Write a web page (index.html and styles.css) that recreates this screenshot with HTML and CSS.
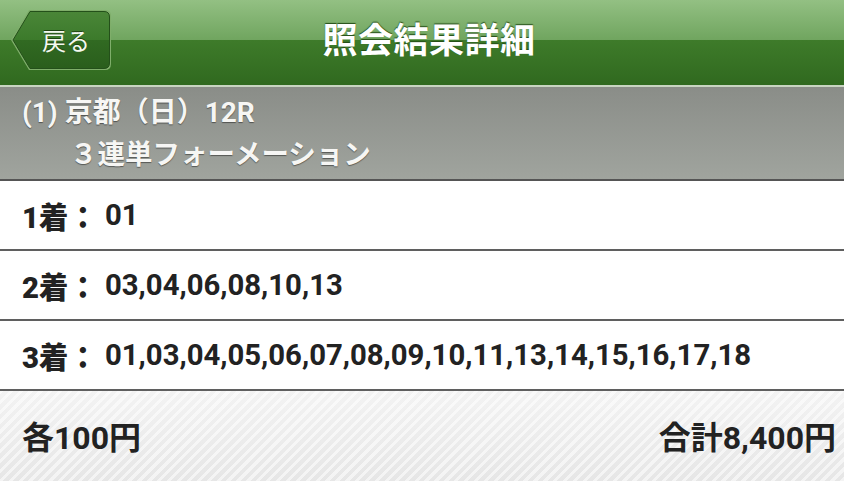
FILE: index.html
```html
<!DOCTYPE html>
<html lang="ja">
<head>
<meta charset="UTF-8">
<meta name="viewport" content="width=device-width, initial-scale=1.0">
<title>照会結果詳細</title>
<link rel="stylesheet" href="styles.css">
</head>
<body>
<header class="topbar">
 <a class="back-btn" href="#">
  <svg class="back-shape" viewBox="0 0 102 62" width="102" height="62">
   <defs>
    <linearGradient id="btnFill" x1="0" y1="0" x2="0" y2="1">
     <stop offset="0" stop-color="#4a8638"/>
     <stop offset=".5" stop-color="#3c7a2b"/>
     <stop offset=".5" stop-color="#316a22"/>
     <stop offset="1" stop-color="#2a5e1c"/>
    </linearGradient>
   </defs>
   <path d="M1 31 L19 1 H95 Q101 1 101 7 V55 Q101 61 95 61 H19 Z" fill="#7fae6a"/>
   <path d="M3 31 L20 2.5 H94 Q99.5 2.5 99.5 8 V54 Q99.5 59.5 94 59.5 H20 Z" fill="url(#btnFill)" stroke="#24501a" stroke-width="1"/>
  </svg>
  <span class="back-label">戻る</span>
 </a>
 <h1 class="page-title">照会結果詳細</h1>
 <span></span>
</header>
<section class="race-info">
 <p>(1) 京都（日）12R</p>
 <p class="bet-type">３連単フォーメーション</p>
</section>
<ul class="picks">
 <li><b>1着：</b>01</li>
 <li><b>2着：</b>03,04,06,08,10,13</li>
 <li><b>3着：</b>01,03,04,05,06,07,08,09,10,11,13,14,15,16,17,18</li>
</ul>
<footer class="summary">
 <span>各100円</span>
 <span>合計8,400円</span>
</footer>
</body>
</html>
```

FILE: styles.css
```css
body{margin:0;font-family:Roboto,"Noto Sans CJK JP",sans-serif;background:#fff;color:#222}
.topbar{display:grid;grid-template-columns:1fr auto 1fr;align-items:center;height:85px;border-bottom:2px solid #c9d5c2;background:linear-gradient(#93c083 0,#70a55f 40px,#3e7b2a 40px,#30691f 100%)}
.back-btn{display:grid;place-items:center;justify-self:start;width:102px;height:62px;margin:0 0 6px 10px;text-decoration:none}
.back-shape,.back-label{grid-area:1/1}
.back-label{color:#f4f8f0;font-size:24px;padding-left:10px;text-shadow:0 -1px 0 #1d4412}
.page-title{margin:0 0 10px;padding-left:14px;color:#fff;font-size:35px;font-weight:bold;letter-spacing:.5px;text-shadow:0 -1px 1px #234d16}
.race-info{height:94px;box-sizing:border-box;padding:5px 22px 0;border-bottom:2px solid #555;background:linear-gradient(#8a8d88,#a0a49e)}
.race-info p{margin:0;color:#f6f6f4;font-size:28px;font-weight:bold;line-height:42px;text-shadow:0 1px 1px rgba(0,0,0,.45)}
.race-info .bet-type{padding-left:48px;font-size:27.5px}
.picks{list-style:none;margin:0;padding:0}
.picks li{display:flex;align-items:center;height:68px;padding:0 22px;border-bottom:2px solid #5f5f5f;font-size:29.3px;font-weight:bold;color:#222}
.picks b{width:83px}
.summary{display:flex;justify-content:space-between;align-items:center;height:88px;padding:0 8px 2px 22px;font-size:32px;font-weight:bold;color:#222;background:repeating-linear-gradient(-45deg,rgba(255,255,255,.55) 0 3px,rgba(255,255,255,0) 3px 7px),linear-gradient(#f3f3f3,#e6e6e6)}
```
